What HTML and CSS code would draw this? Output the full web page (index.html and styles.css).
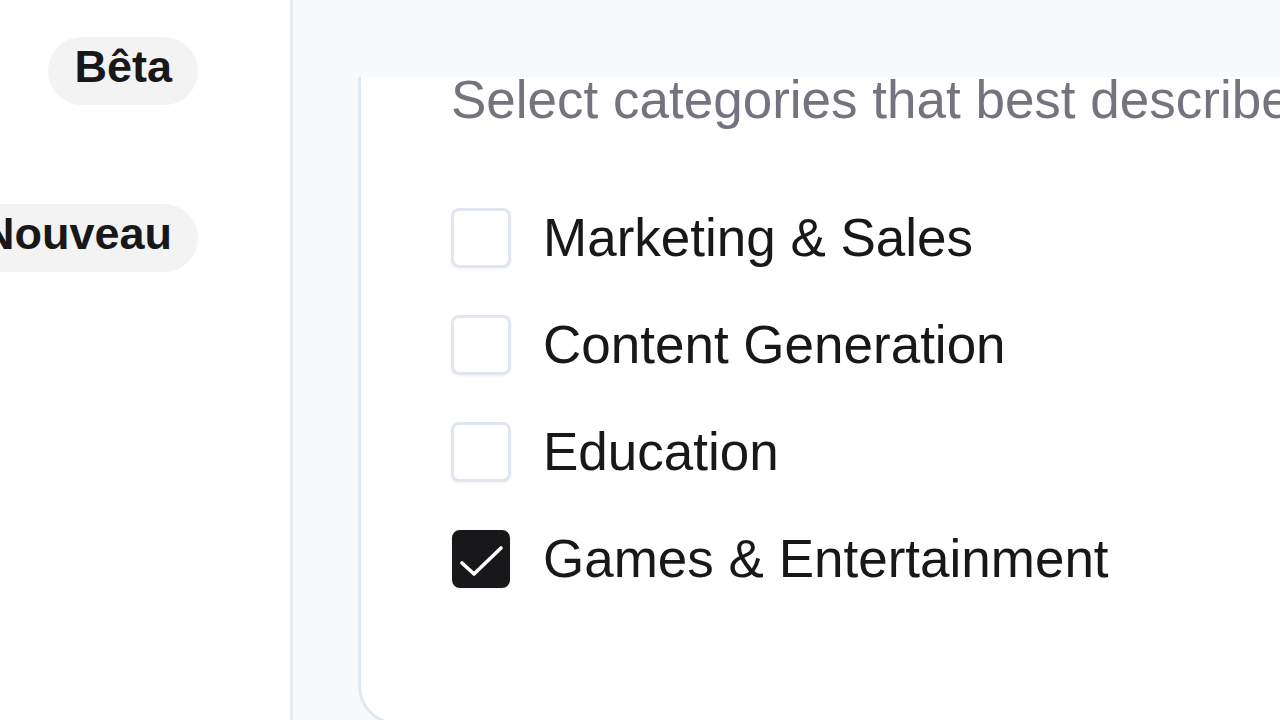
FILE: index.html
```html
<!DOCTYPE html>
<html lang="en">
<head>
<meta charset="utf-8">
<title>Categories</title>
<link rel="stylesheet" href="styles.css">
</head>
<body>
<div class="app">
  <aside class="sidebar">
    <div class="nav-row"><span class="badge">Bêta</span></div>
    <div class="nav-row"><span class="badge">Nouveau</span></div>
  </aside>
  <main class="main">
    <div class="topbar"></div>
    <section class="card">
      <p class="subtitle">Select categories that best describe your agent</p>
      <div class="options">
        <label class="option"><span class="box"></span><span class="label">Marketing &amp; Sales</span></label>
        <label class="option"><span class="box"></span><span class="label">Content Generation</span></label>
        <label class="option"><span class="box"></span><span class="label">Education</span></label>
        <label class="option"><span class="box checked"><svg viewBox="0 0 56 56" width="56" height="56"><path d="M9 32 L21 43 L48 17" /></svg></span><span class="label">Games &amp; Entertainment</span></label>
      </div>
    </section>
  </main>
</div>
</body>
</html>
```

FILE: styles.css
```css
* { box-sizing: border-box; }
html, body { margin: 0; padding: 0; }
body {
  width: 1280px;
  height: 720px;
  overflow: hidden;
  font-family: "Liberation Sans", Arial, sans-serif;
  color: #18181b;
  background: #ffffff;
}
.app {
  display: flex;
  height: 720px;
  overflow: hidden;
}
.sidebar {
  width: 293px;
  flex-shrink: 0;
  background: #ffffff;
  border-right: 3px solid #e8eaf0;
  display: flex;
  flex-direction: column;
  gap: 99px;
  padding: 37px 92px 0 0;
}
.nav-row {
  display: flex;
  justify-content: flex-end;
  height: 68px;
}
.badge {
  flex-shrink: 0;
  white-space: nowrap;
  background: #f3f3f4;
  border-radius: 34px;
  height: 68px;
  padding: 5px 26px 0 26px;
  font-size: 45px;
  line-height: 50px;
  font-weight: 700;
  color: #18181b;
}
.main {
  flex: 1;
  min-width: 0;
  background: #f8f9fb;
  padding-left: 65px;
  overflow: hidden;
  display: flex;
  flex-direction: column;
}
.topbar {
  height: 77px;
  flex-shrink: 0;
}
.card {
  flex: 1 0 auto;
  margin-bottom: -5px;
  background: #ffffff;
  border-left: 3px solid #e2e8f0;
  border-bottom: 3px solid #e2e8f0;
  border-bottom-left-radius: 39px;
  padding-left: 90px;
  min-width: 1100px;
}
.subtitle {
  margin: 0;
  font-size: 53px;
  line-height: 46px;
  color: #74747f;
  white-space: nowrap;
}
.options {
  display: flex;
  flex-direction: column;
  gap: 47px;
  margin-top: 85px;
}
.option {
  display: flex;
  align-items: center;
  gap: 32px;
  height: 60px;
}
.box {
  width: 60px;
  height: 60px;
  flex-shrink: 0;
  border: 3px solid #e0e6ef;
  border-radius: 8px;
  background: #ffffff;
  box-shadow: 0 1px 3px rgba(15, 23, 42, 0.06);
  display: flex;
  align-items: center;
  justify-content: center;
}
.box.checked {
  background: #18181b;
  border-color: #18181b;
  width: 58px;
  height: 58px;
  margin-left: 1px;
  margin-right: 1px;
}
.box svg {
  display: block;
  flex-shrink: 0;
}
.box svg path {
  fill: none;
  stroke: #ffffff;
  stroke-width: 3.6;
  stroke-linecap: round;
  stroke-linejoin: round;
}
.label {
  font-size: 53px;
  line-height: 60px;
  color: #18181b;
  white-space: nowrap;
}
```
